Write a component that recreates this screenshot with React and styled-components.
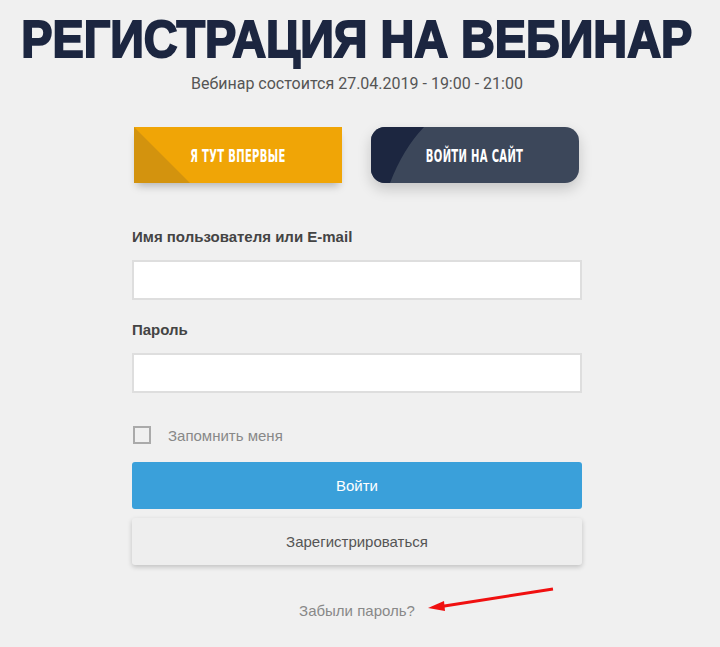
import styled, { createGlobalStyle } from 'styled-components';

const Global = createGlobalStyle`
  html, body {
    margin: 0;
    padding: 0;
    background: #f0f0f0;
  }
  body {
    font-family: "Liberation Sans", Arial, sans-serif;
  }
`;

const Page = styled.div`
  width: 714px;
  display: flex;
  flex-direction: column;
  align-items: center;
`;

const Title = styled.h1`
  margin: 10px 0 0;
  font-family: "Liberation Sans", Arial, sans-serif;
  font-weight: 700;
  font-size: 52px;
  line-height: 58px;
  letter-spacing: 0;
  color: #1c2640;
  -webkit-text-stroke: 2px #1c2640;
  white-space: nowrap;
  transform: scaleX(0.9);
`;

const Subtitle = styled.p`
  margin: 6px 0 0;
  font-family: Roboto, "Liberation Sans", sans-serif;
  font-size: 16px;
  color: #555;
`;

const Switcher = styled.div`
  width: 450px;
  margin-top: 34px;
  display: flex;
  justify-content: space-between;
  padding: 0 3px 0 2px;
  box-sizing: border-box;
`;

const TabButton = styled.button`
  position: relative;
  overflow: hidden;
  width: 208px;
  height: 56px;
  border: none;
  border-radius: ${p => (p.$dark ? '14px' : '0')};
  background: ${p => (p.$dark ? '#3c475a' : '#f0a506')};
  box-shadow: ${p =>
    p.$dark ? '0 6px 14px rgba(0,0,0,0.18)' : '0 6px 8px -3px rgba(0,0,0,0.25)'};
  color: #fff;
  font-family: "DejaVu Sans Condensed", "DejaVu Sans", sans-serif;
  font-weight: 700;
  font-size: 18px;
  letter-spacing: 0.5px;
  padding: 0;
  cursor: pointer;
`;

const Corner = styled.svg`
  position: absolute;
  left: 0;
  top: 0;
`;

const TabLabel = styled.span`
  position: relative;
  display: inline-block;
  transform: scaleX(0.62);
  white-space: nowrap;
`;

const Form = styled.form`
  width: 450px;
  margin-top: 45px;
  display: flex;
  flex-direction: column;
`;

const Label = styled.label`
  font-weight: 700;
  font-size: 15px;
  color: #444;
  margin-bottom: 15px;
`;

const Input = styled.input`
  height: 40px;
  box-sizing: border-box;
  border: 2px solid #dedede;
  background: #fff;
  margin-bottom: 21px;
  outline: none;
`;

const Remember = styled.div`
  display: flex;
  align-items: center;
  gap: 17px;
  margin: 12px 0 18px 1px;
  font-size: 15px;
  color: #888;
`;

const Box = styled.span`
  width: 18px;
  height: 18px;
  box-sizing: border-box;
  border: 2px solid #aaa;
`;

const Action = styled.button`
  height: 47px;
  border: none;
  border-radius: 3px;
  background: ${p => (p.$primary ? '#3aa0da' : '#eeeeee')};
  color: ${p => (p.$primary ? '#fff' : '#555')};
  box-shadow: ${p => (p.$primary ? 'none' : '0 2px 5px rgba(0,0,0,0.2)')};
  font-family: "Liberation Sans", Arial, sans-serif;
  font-size: 15px;
  margin-bottom: 9px;
  cursor: pointer;
`;

const Forgot = styled.div`
  position: relative;
  margin-top: 28px;
  text-align: center;
  font-size: 15px;
  color: #888;
`;

const Arrow = styled.svg`
  position: absolute;
  left: 294px;
  top: -15px;
`;

export default function App() {
  return (
    <Page>
      <Global />
      <Title>РЕГИСТРАЦИЯ НА ВЕБИНАР</Title>
      <Subtitle>Вебинар состоится 27.04.2019 - 19:00 - 21:00</Subtitle>
      <Switcher>
        <TabButton type="button">
          <Corner width="208" height="56">
            <polygon points="0,0 56,56 0,56" fill="#d3930e" />
          </Corner>
          <TabLabel>Я ТУТ ВПЕРВЫЕ</TabLabel>
        </TabButton>
        <TabButton type="button" $dark>
          <Corner width="208" height="56">
            <path d="M0,0 L53,0 Q32,22 19,56 L0,56 Z" fill="#1c2640" />
          </Corner>
          <TabLabel>ВОЙТИ НА САЙТ</TabLabel>
        </TabButton>
      </Switcher>
      <Form>
        <Label>Имя пользователя или E-mail</Label>
        <Input type="text" />
        <Label>Пароль</Label>
        <Input type="password" />
        <Remember>
          <Box />
          Запомнить меня
        </Remember>
        <Action type="button" $primary>Войти</Action>
        <Action type="button">Зарегистрироваться</Action>
        <Forgot>
          Забыли пароль?
          <Arrow width="130" height="26" viewBox="0 0 130 26">
            <line x1="127" y1="2" x2="12" y2="20" stroke="#f01010" strokeWidth="3" />
            <polygon points="2,21 18,14 19,24" fill="#f01010" />
          </Arrow>
        </Forgot>
      </Form>
    </Page>
  );
}
